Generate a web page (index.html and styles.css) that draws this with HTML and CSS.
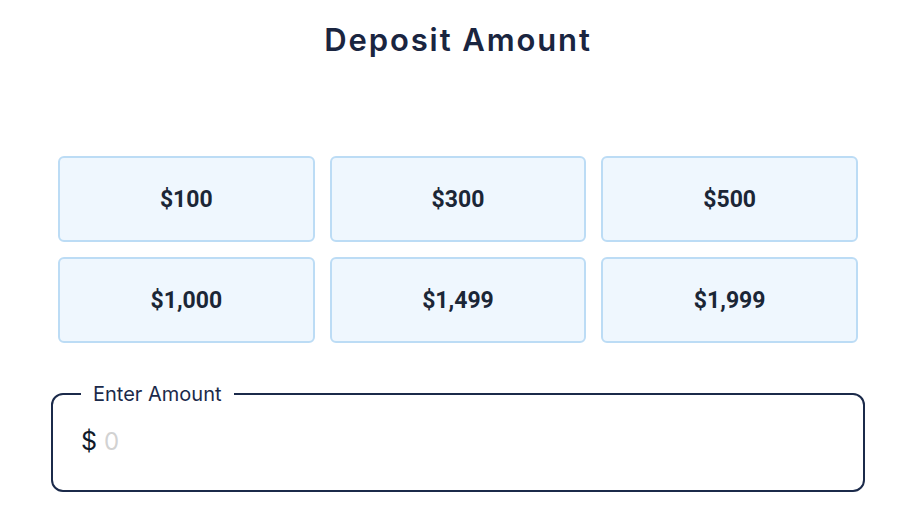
FILE: index.html
```html
<!DOCTYPE html>
<html>
<head>
<meta charset="utf-8">
<link rel="stylesheet" href="styles.css">
</head>
<body>
<div class="page">
  <h1 class="title">Deposit Amount</h1>
  <div class="grid">
    <button class="amt">$100</button>
    <button class="amt">$300</button>
    <button class="amt">$500</button>
    <button class="amt">$1,000</button>
    <button class="amt">$1,499</button>
    <button class="amt">$1,999</button>
  </div>
  <fieldset class="field">
    <legend class="legend">Enter Amount</legend>
    <div class="row">
      <span class="cur">$</span>
      <input class="input" type="text" placeholder="0">
    </div>
  </fieldset>
</div>
</body>
</html>
```
FILE: styles.css
```css
* { box-sizing: border-box; }
html, body { margin: 0; padding: 0; background: #fff; }
body { width: 916px; height: 526px; overflow: hidden; font-family: Roboto, "Liberation Sans", sans-serif; color: #1b2a41; }
.page { padding: 0 52px; }
.title {
  margin: 0;
  padding-top: 18px;
  height: 156px;
  text-align: center;
  font-family: Inter, "Noto Sans", sans-serif;
  font-weight: 600;
  font-size: 31px;
  line-height: 44px;
  color: #1a2540;
  letter-spacing: 1.9px;
}
.grid {
  display: grid;
  grid-template-columns: repeat(3, 1fr);
  gap: 15px 15px;
  padding: 0 6px;
}
.amt {
  height: 86px;
  background: #eff7fe;
  border: 2px solid #bcdcf5;
  border-radius: 6px;
  font-family: Roboto, "Liberation Sans", sans-serif;
  font-weight: 700;
  font-size: 23px;
  color: #1b2636;
  padding: 0;
}
.field {
  margin: 40px -1px 0 -1px;
  height: 109px;
  border: 2px solid #1b2a4a;
  border-radius: 12px;
  padding: 0 0 0 28px;
}
.legend {
  padding: 0 12px;
  margin-left: 0;
  font-family: Inter, "Noto Sans", sans-serif;
  font-size: 20px;
  color: #1b2a4a;
  line-height: 22px;
}
.row { display: flex; align-items: center; height: 52px; padding-top: 20px; }
.cur { font-family: Inter, "Noto Sans", sans-serif; font-size: 25px; color: #111a2a; }
.input {
  border: none;
  outline: none;
  font-family: Inter, "Noto Sans", sans-serif;
  font-size: 24px;
  margin-left: 7px;
  padding: 0;
  width: 600px;
  color: #1b2636;
  background: transparent;
}
.input::placeholder { color: #d2d2d2; }
```
